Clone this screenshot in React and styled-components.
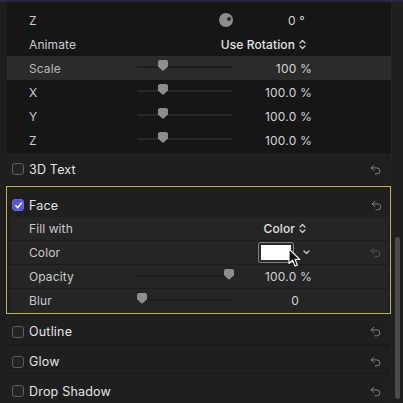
import React from "react";
import styled, { createGlobalStyle, css } from "styled-components";
import { Undo2 } from "lucide-react";

const GlobalStyle = createGlobalStyle`
  html, body { margin: 0; padding: 0; background: #1e1e1e; overflow: hidden; }
  * { box-sizing: border-box; }
  body { font-family: Inter, "Noto Sans", "DejaVu Sans", sans-serif; -webkit-font-smoothing: antialiased; }
`;

const Frame = styled.div`
  width: 403px;
  height: 403px;
  background: #1e1e1e;
  border-top: 2px solid #2a2640;
  display: flex;
  overflow: hidden;
`;

const Content = styled.div`
  flex: 1;
  padding-left: 6px;
  display: flex;
  flex-direction: column;
  min-width: 0;
`;

const ScrollTrack = styled.div`
  width: 12px;
  background: #1f1f1f;
  border-left: 1px solid #232323;
  display: flex;
  flex-direction: column;
  align-items: center;
`;

const ScrollThumb = styled.div`
  margin-top: 235px;
  width: 5px;
  height: 162px;
  border-radius: 3px;
  background: #4b4b4b;
`;

const TopPanel = styled.div`
  margin-left: 1px;
  background: #161616;
  padding: 6px 0 1px;
`;

const ParamRow = styled.div`
  display: grid;
  grid-template-columns: ${(p) => 137 - p.$left}px 96px 79px 1fr;
  align-items: center;
  height: 24px;
  color: #c9c9c9;
  font-size: 12px;
  background: ${(p) => (p.$highlight ? "#2b2b2b" : "transparent")};
  ${(p) =>
    p.$sep &&
    css`
      border-bottom: 1px solid #1c1c1c;
    `}
`;

const Label = styled.div`
  padding-left: ${(p) => 29 - p.$left}px;
  color: ${(p) => (p.$dim ? "#b8b8b8" : "#cacaca")};
  letter-spacing: 0.1px;
`;

const SliderBox = styled.div`
  position: relative;
  height: 24px;
`;

const Track = styled.div`
  position: absolute;
  left: 0;
  right: 1px;
  top: 10px;
  height: 2px;
  border-radius: 1px;
  background: ${(p) => (p.$onLight ? "#1d1d1d" : "#282828")};
`;

const Thumb = styled.div`
  position: absolute;
  top: 4px;
  width: 10px;
  height: 11px;
  background: #8e8e8e;
  border-radius: 2px 2px 0 0;
  clip-path: polygon(0 0, 100% 0, 100% 60%, 50% 100%, 0 60%);
`;

const Value = styled.div`
  text-align: right;
  color: #d4d4d4;
  padding-right: ${(p) => p.$pr || 0}px;
  letter-spacing: 0.2px;
`;

const DialCell = styled.div`
  display: flex;
  justify-content: flex-end;
`;

const Dial = styled.div`
  width: 14px;
  height: 14px;
  border-radius: 50%;
  background: #8c8c8c;
  position: relative;
  &::after {
    content: "";
    position: absolute;
    width: 4px;
    height: 4px;
    border-radius: 50%;
    background: #2a2a2a;
    left: 7.5px;
    top: 3.5px;
  }
`;

const Popup = styled.div`
  grid-column: 2 / 4;
  display: flex;
  justify-content: flex-end;
  align-items: center;
  gap: 4px;
  padding-right: 6px;
  color: #e2e2e2;
  font-weight: 500;
  letter-spacing: 0.1px;
`;

const EndCell = styled.div`
  display: flex;
  justify-content: flex-end;
  padding-right: ${(p) => p.$pr}px;
`;

const SectionHeader = styled.div`
  height: ${(p) => p.$h}px;
  display: flex;
  align-items: center;
  padding-top: ${(p) => p.$pt || 0}px;
  padding-left: ${(p) => 12 - p.$left}px;
  padding-right: ${(p) => p.$pr}px;
  background: #1f1f1f;
  color: #e4e4e4;
  font-size: 12.5px;
  font-weight: 400;
  margin-bottom: ${(p) => p.$mb || 0}px;
  ${(p) =>
    p.$line &&
    css`
      border-bottom: 1px solid #191919;
    `}
`;

const HeaderLabel = styled.span`
  margin-left: 5px;
  flex: 1;
  letter-spacing: 0.2px;
`;

const Check = styled.div`
  width: 12px;
  height: 12px;
  border-radius: 3px;
  border: 1px solid ${(p) => (p.$on ? "#6a68ea" : "#5e5e5e")};
  background: ${(p) => (p.$on ? "#5856d6" : "#242424")};
  display: flex;
  align-items: center;
  justify-content: center;
`;

const FocusBox = styled.div`
  border: 1px solid #c3b04a;
  display: flex;
  flex-direction: column;
`;

const SubRows = styled.div`
  margin-left: 3px;
  margin-right: 1px;
  background: #252525;
`;

const WellGroup = styled.div`
  display: flex;
  align-items: center;
  justify-content: flex-end;
  gap: 9px;
  padding-right: 2px;
  position: relative;
`;

const Well = styled.div`
  width: 36px;
  height: 21px;
  border: 1px solid #7c7c7c;
  border-radius: 2px;
  padding: 2px;
  background: #2b2b2b;
  &::before {
    content: "";
    display: block;
    width: 100%;
    height: 100%;
    background: #ffffff;
  }
`;

const Cursor = styled.svg`
  position: absolute;
  left: 55px;
  top: 6px;
  width: 13px;
  height: 20px;
`;

function UpDown() {
  return (
    <svg width="7" height="11" viewBox="0 0 7 11" fill="none" stroke="#cfcfcf" strokeWidth="1.2" strokeLinecap="round" strokeLinejoin="round">
      <path d="M1 4 3.5 1.5 6 4" />
      <path d="M1 7 3.5 9.5 6 7" />
    </svg>
  );
}

function ChevronDown() {
  return (
    <svg width="7" height="5" viewBox="0 0 7 5" fill="none" stroke="#c4c4c4" strokeWidth="1.4" strokeLinecap="round" strokeLinejoin="round">
      <path d="M1 1 3.5 3.5 6 1" />
    </svg>
  );
}

function Tick() {
  return (
    <svg width="9" height="9" viewBox="0 0 9 9" fill="none" stroke="#ffffff" strokeWidth="1.5" strokeLinecap="round" strokeLinejoin="round">
      <path d="M1.8 4.8 3.7 6.8 7.4 2" />
    </svg>
  );
}

function Slider({ pos, onLight }) {
  return (
    <SliderBox>
      <Track $onLight={onLight} />
      <Thumb style={{ left: pos }} />
    </SliderBox>
  );
}

function Reset({ color }) {
  return <Undo2 size={13} strokeWidth={1.6} color={color || "#8e8e8e"} />;
}

function Header({ label, on, left, pr, h, line, mb, pt }) {
  return (
    <SectionHeader $left={left} $pr={pr} $h={h} $line={line} $mb={mb} $pt={pt}>
      <Check $on={on}>{on && <Tick />}</Check>
      <HeaderLabel>{label}</HeaderLabel>
      <Reset />
    </SectionHeader>
  );
}

const topRows = [
  { label: "Scale", value: "100 %", pos: 21, highlight: true },
  { label: "X", value: "100.0 %", pos: 21 },
  { label: "Y", value: "100.0 %", pos: 21 },
  { label: "Z", value: "100.0 %", pos: 21 },
];

export default function App() {
  return (
    <>
      <GlobalStyle />
      <Frame>
        <Content>
          <TopPanel>
            <ParamRow $left={7}>
              <Label $left={7}>Z</Label>
              <DialCell>
                <Dial />
              </DialCell>
              <Value $pr={7}>0 °</Value>
            </ParamRow>
            <ParamRow $left={7}>
              <Label $left={7}>Animate</Label>
              <Popup>
                Use Rotation <UpDown />
              </Popup>
            </ParamRow>
            {topRows.map((r, i) => (
              <ParamRow key={i} $left={7} $highlight={r.highlight}>
                <Label $left={7} $dim={r.highlight}>{r.label}</Label>
                <Slider pos={r.pos} onLight={r.highlight} />
                <Value>{r.value}</Value>
              </ParamRow>
            ))}
          </TopPanel>

          <Header label="3D Text" left={6} pr={9} h={33} mb={1} pt={1} />

          <FocusBox>
            <Header label="Face" on left={7} pr={7} h={30} pt={7} />
            <SubRows>
              <ParamRow $left={10} $sep>
                <Label $left={10}>Fill with</Label>
                <Popup>
                  Color <UpDown />
                </Popup>
              </ParamRow>
              <ParamRow $left={10} $sep>
                <Label $left={10}>Color</Label>
                <div />
                <WellGroup>
                  <Well />
                  <ChevronDown />
                  <Cursor viewBox="0 0 13 20">
                    <path
                      d="M1 1 L1 15.5 L4.6 12.2 L7 18 L9.4 17 L7.1 11.4 L11.8 11.4 Z"
                      fill="#111"
                      stroke="#fff"
                      strokeWidth="1.1"
                      strokeLinejoin="round"
                    />
                  </Cursor>
                </WellGroup>
                <EndCell $pr={7}>
                  <Reset color="#5e5e5e" />
                </EndCell>
              </ParamRow>
              <ParamRow $left={10} $sep>
                <Label $left={10}>Opacity</Label>
                <Slider pos={87} onLight />
                <Value>100.0 %</Value>
              </ParamRow>
              <ParamRow $left={10}>
                <Label $left={10}>Blur</Label>
                <Slider pos={0} onLight />
                <Value $pr={13}>0</Value>
              </ParamRow>
            </SubRows>
          </FocusBox>

          <Header label="Outline" left={6} pr={9} h={32} pt={6} line />
          <Header label="Glow" left={6} pr={9} h={30} pt={6} line />
          <Header label="Drop Shadow" left={6} pr={9} h={30} pt={6} />
        </Content>
        <ScrollTrack>
          <ScrollThumb />
        </ScrollTrack>
      </Frame>
    </>
  );
}
